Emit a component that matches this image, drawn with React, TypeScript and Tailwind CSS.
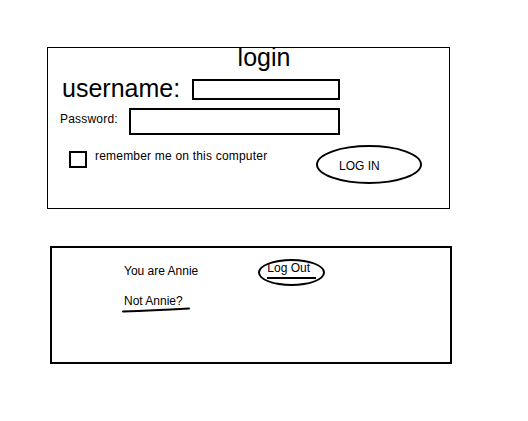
import * as React from "react";

const font = { fontFamily: '"Liberation Sans", Arial, sans-serif' };

const LoginBox = () => {
  return (
    <div className="ml-[47px] mt-[47px] w-[403px] h-[162px] border border-black flex flex-col">
      <div className="pl-[31px] text-center text-[25px] leading-[18px]">login</div>

      <div className="mt-[13px] flex items-start">
        <span className="ml-[14px] text-[25px] leading-[19px]">username:</span>
        <div className="ml-[12px] w-[148px] h-[21px] border-2 border-black"></div>
      </div>

      <div className="mt-[8px] flex items-start">
        <span className="ml-[12px] text-[12px] leading-[22px] tracking-[0.2px]">Password:</span>
        <div className="ml-[11px] w-[211px] h-[27px] border-2 border-black"></div>
      </div>

      <div className="mt-[10px] flex items-start">
        <div className="ml-[21px] mt-[6px] w-[18px] h-[17px] border-2 border-black"></div>
        <span className="ml-[8px] text-[12px] leading-[22px] tracking-[0.2px]">remember me on this computer</span>
        <div className="ml-auto mr-[27px] w-[106px] h-[39px] border-2 border-black rounded-[50%] pl-[21px] pt-[11px] text-[12px] leading-[16px]">
          LOG IN
        </div>
      </div>
    </div>
  );
};

const LoggedInBox = () => {
  return (
    <div className="ml-[50px] mt-[37px] w-[402px] h-[118px] border-2 border-black flex flex-col">
      <div className="mt-[11px] flex items-start">
        <span className="ml-[72px] mt-[4px] text-[12px] leading-[16px]">You are Annie</span>
        <div className="ml-[60px] w-[67px] h-[27px] border-2 border-black rounded-[50%] pl-[7px] pt-[1px]">
          <div className="text-[12px] leading-[12px]">Log Out</div>
          <div className="mt-[3px] w-[49px] h-[2px] bg-black"></div>
        </div>
      </div>

      <div className="mt-[7px] ml-[72px] text-[12px] leading-[16px]">Not Annie?</div>
      <svg className="-mt-[2px] ml-[70px]" width="70" height="6" viewBox="0 0 70 6">
        <path d="M1 4.5 Q30 3.5 67 1.5" stroke="black" strokeWidth="2" fill="none" strokeLinecap="round" />
      </svg>
    </div>
  );
};

const App = () => {
  return (
    <div className="w-[528px] h-[421px] bg-white text-black overflow-hidden flex flex-col" style={font}>
      <LoginBox />
      <LoggedInBox />
    </div>
  );
};

export default App;
